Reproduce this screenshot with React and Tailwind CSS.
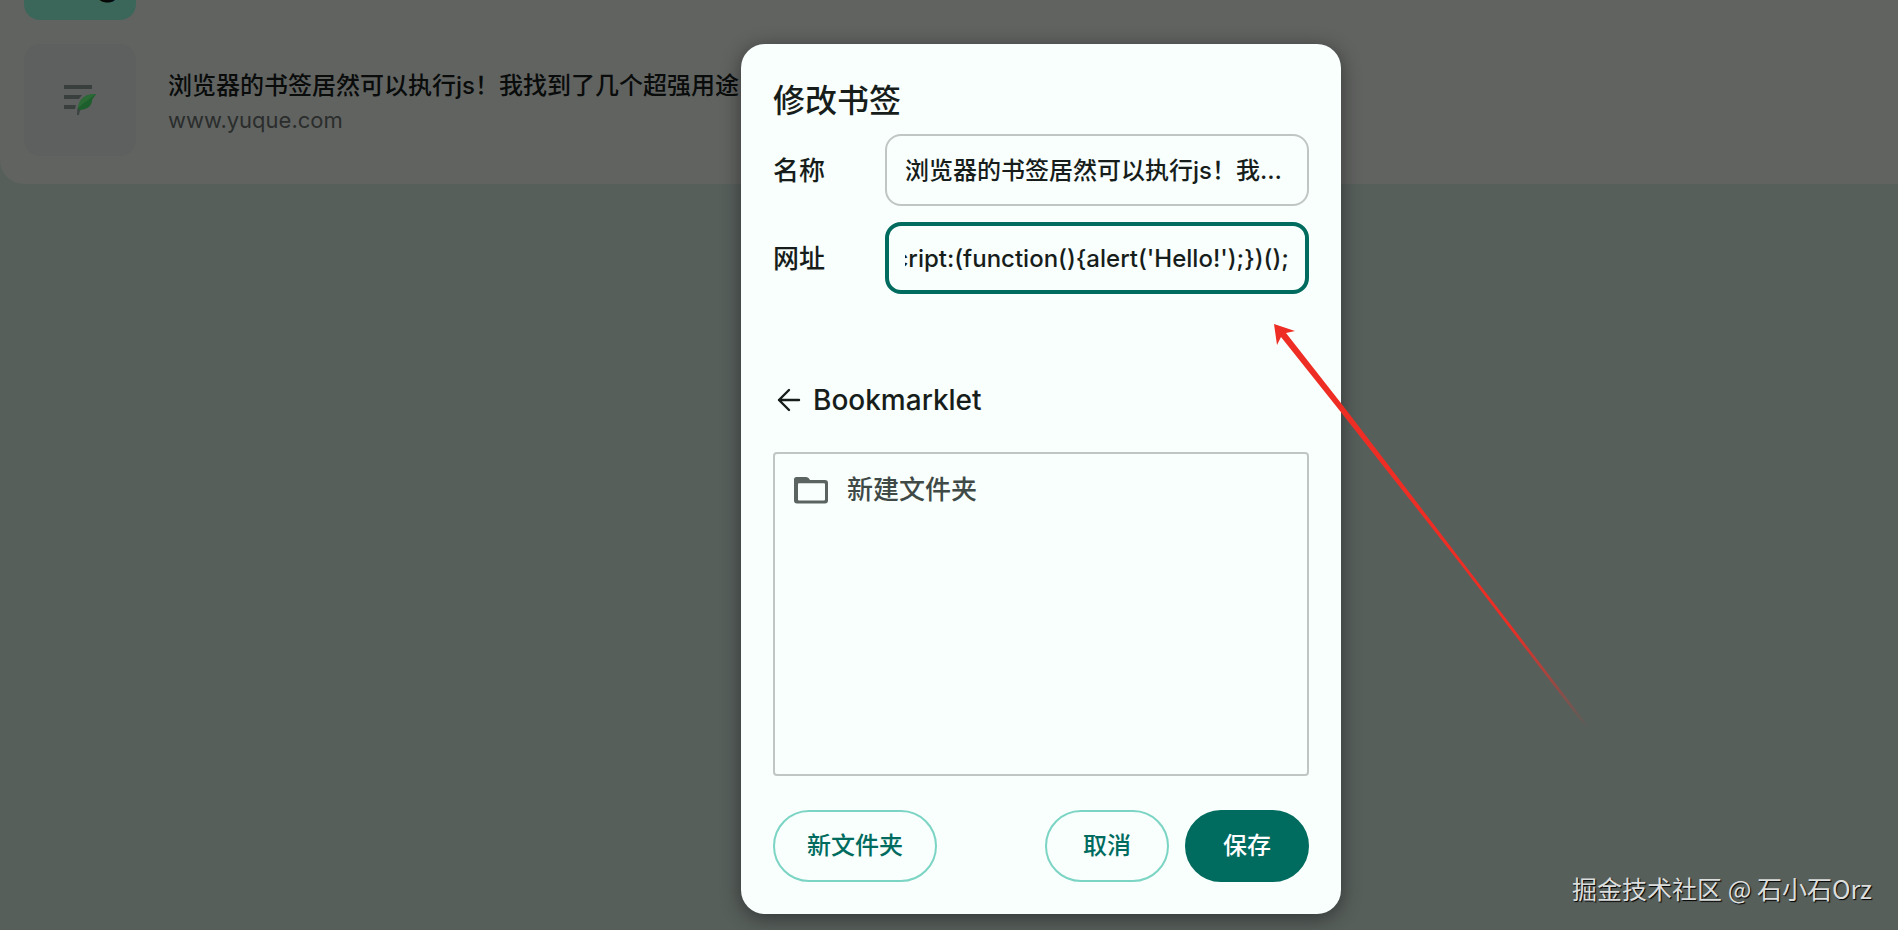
import React, { useEffect, useRef, useState } from 'react';

const bookmark = {
  title: '浏览器的书签居然可以执行js！我找到了几个超强用途',
  host: 'www.yuque.com',
  url: "javascript:(function(){alert('Hello!');})();"
};

const YuqueIcon = () => (
  <svg className="h-8 w-8" viewBox="0 0 32 32" fill="none">
    <path d="M0 1h28v4H0zM0 11h18l-3 4H0zM0 21h12l-1 4H0z" fill="#393f3d" />
    <path d="M14 23C13 26 13 28 13 31H15C15 29 16 27 17 25Z" fill="#3c4441" />
    <path d="M32 10C22 10 15 14 14 25L16 26C25 25 28 21 28 16C29 14 31 12 32 10Z" fill="#1d5e2d" />
    <path d="M32 10C22 10 15 14 14 24C19 20 25 15 32 10Z" fill="#2b6a35" />
  </svg>
);

// Red pointer drawn over the dialog, fading out towards its tail
const Pointer = () => (
  <svg className="pointer-events-none absolute left-[533px] top-[280px] h-[410px] w-[320px]" viewBox="0 0 320 410" fill="none">
    <defs>
      <linearGradient id="tail" x1="0" y1="0" x2="314" y2="404" gradientUnits="userSpaceOnUse">
        <stop offset="0.75" stopColor="#ee2d24" />
        <stop offset="1" stopColor="#ee2d24" stopOpacity="0" />
      </linearGradient>
    </defs>
    <path d="M0 0L21 7L12 9L70 83L190 240L315 403L313 405L188 242L66 87L7 13L3 21Z" fill="url(#tail)" />
  </svg>
);

const App = () => {
  const [name, setName] = useState(bookmark.title);
  const [url, setUrl] = useState(bookmark.url);
  const urlRef = useRef(null);

  // Show the end of a long address
  useEffect(() => {
    if (urlRef.current) {
      urlRef.current.scrollLeft = urlRef.current.scrollWidth;
    }
  }, []);

  return (
    <div className="relative min-h-screen overflow-hidden bg-[#575f5b] font-[Inter,'Noto_Sans_CJK_SC',sans-serif] font-medium text-[#171d1b]">
      <div className="-mt-[92px] flex flex-col gap-6 rounded-bl-3xl bg-[#616361] px-6 pb-7">
        <div className="flex h-28 w-28 items-end justify-end rounded-2xl bg-[#3b675b] px-4 pb-5 text-[40px] leading-none text-[#060908]">
          g
        </div>
        <div className="flex items-center gap-8">
          <div className="flex h-28 w-28 items-center justify-center rounded-2xl bg-[#5d605e]">
            <YuqueIcon />
          </div>
          <div className="pt-1">
            <div className="text-[24px] leading-9 text-[#090c0b]">{bookmark.title}</div>
            <div className="text-[22px] leading-8 font-normal text-[#2a2d2c]">{bookmark.host}</div>
          </div>
        </div>
      </div>

      <div className="absolute inset-0 flex items-start justify-center pt-11 pl-[184px]">
        <div
          role="dialog"
          aria-labelledby="dialog-title"
          className="relative w-[600px] rounded-3xl bg-[#f8fffc] px-8 pt-8 pb-8 shadow-[0_4px_20px_rgba(0,0,0,0.45)]"
        >
          <h2 id="dialog-title" className="mb-2 text-[32px] leading-[50px]">修改书签</h2>

          <div className="flex flex-col gap-4 text-[24px]">
            <div className="flex items-center justify-between">
              <label htmlFor="name" className="text-[26px]">名称</label>
              <input
                id="name"
                type="text"
                value={name}
                onChange={(e) => setName(e.target.value)}
                className="h-[72px] w-[424px] text-ellipsis rounded-2xl border-2 border-[#bfc6c3] px-[18px] pb-1 outline-none"
              />
            </div>
            <div className="flex items-center justify-between">
              <label htmlFor="url" className="text-[26px]">网址</label>
              <input
                id="url"
                ref={urlRef}
                type="text"
                value={url}
                onChange={(e) => setUrl(e.target.value)}
                className="h-[72px] w-[424px] rounded-2xl border-4 border-[#006b5f] px-4 outline-none"
              />
            </div>
          </div>

          <div className="mt-[86px] mb-8 flex items-center gap-2">
            <button type="button" aria-label="返回" className="flex h-8 w-8 items-center justify-center">
              <svg className="h-8 w-8" viewBox="0 0 32 32" fill="none" stroke="currentColor" strokeWidth={2.4} strokeLinecap="round" strokeLinejoin="round">
                <path d="M26 16H6M16 6L6 16L16 26" />
              </svg>
            </button>
            <span className="text-[28px] leading-10">Bookmarklet</span>
          </div>

          <ul className="h-[324px] rounded border-2 border-[#bfc6c3] px-4 py-4 text-[#3f4946]">
            <li className="flex items-center gap-4 text-[26px] leading-10">
              <svg className="h-10 w-10" viewBox="0 0 40 40" fill="#5c6461">
                <path fillRule="evenodd" d="M5.500 7H15Q17 7 18 8.500L19 10H34Q37 10 37 13V30.500Q37 33.500 34 33.500H6Q3 33.500 3 30.500V9.500Q3 7 5.500 7ZM8 13.200Q7 13.200 7 14.200V29.500Q7 30.500 8 30.500H33Q34 30.500 34 29.500V14.200Q34 13.200 33 13.200Z" />
              </svg>
              新建文件夹
            </li>
          </ul>

          <div className="mt-[34px] flex gap-4 text-[24px]">
            <button type="button" className="h-[72px] rounded-full border-2 border-[#7cd4c4] px-8 text-[#006b5f]">新文件夹</button>
            <button type="button" className="ml-auto h-[72px] rounded-full border-2 border-[#7cd4c4] px-9 text-[#006b5f]">取消</button>
            <button type="button" className="h-[72px] rounded-full border-2 border-[#006b5f] bg-[#006b5f] px-9 text-white">保存</button>
          </div>

          <Pointer />
        </div>
      </div>

      <div className="absolute right-[26px] bottom-[22px] font-['Noto_Sans_CJK_SC',sans-serif] text-[25px] leading-10 font-normal text-[#dcdedd] [text-shadow:1px_1px_1px_#000]">
        掘金技术社区 @ 石小石Orz
      </div>
    </div>
  );
};

export default App;
